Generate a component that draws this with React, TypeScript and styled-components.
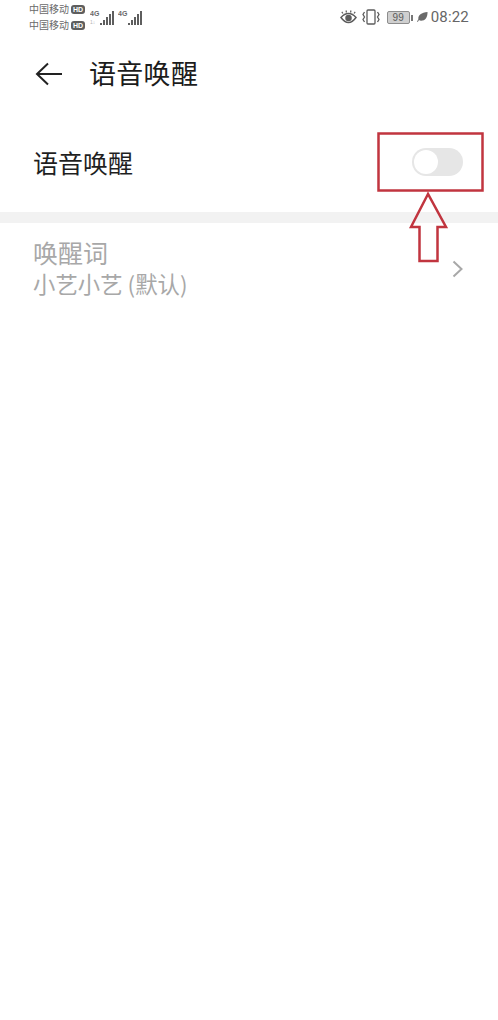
import React from "react";
import styled, { createGlobalStyle } from "styled-components";

const GlobalStyle = createGlobalStyle`
  html, body {
    margin: 0;
    padding: 0;
    background: #fff;
  }
  body {
    font-family: "Noto Sans CJK SC", "Liberation Sans", sans-serif;
  }
`;

const Screen = styled.div`
  position: relative;
  width: 498px;
  height: 1020px;
  overflow: hidden;
  background: #fff;
`;

// status bar
const StatusBar = styled.div`
  display: flex;
  align-items: flex-start;
  justify-content: space-between;
  height: 35px;
  padding: 2px 29px 0 29px;
  box-sizing: border-box;
  color: #6a6a6a;
`;

const StatusLeft = styled.div`
  display: flex;
  align-items: flex-start;
`;

const Carriers = styled.div`
  display: flex;
  flex-direction: column;
  gap: 2px;
  width: 60px;
`;

const Carrier = styled.div`
  display: flex;
  align-items: center;
  gap: 2px;
  height: 14px;
  font-size: 10px;
  line-height: 14px;
  white-space: nowrap;
`;

const HdBadge = styled.span`
  display: inline-flex;
  align-items: center;
  justify-content: center;
  width: 14px;
  height: 9px;
  border-radius: 3px;
  background: #5e5e5e;
  color: #fff;
  font-family: "Liberation Sans", sans-serif;
  font-size: 7px;
  font-weight: 700;
  line-height: 9px;
`;

const SignalGroup = styled.div`
  display: flex;
  gap: 4px;
  margin-top: 7px;
  margin-left: 1px;
`;

const StatusRight = styled.div`
  display: flex;
  align-items: center;
  height: 30px;
`;

const VibrateWrap = styled.div`
  display: flex;
  margin-left: 4px;
`;

const BatteryBox = styled.div`
  display: flex;
  align-items: center;
  margin: 1px 4px 0 6px;
`;

const BatteryBody = styled.div`
  width: 21px;
  height: 11px;
  border: 1px solid #8d8d8d;
  border-radius: 2px;
  background: #cfcfcf;
  color: #5c5c5c;
  font-family: "Liberation Sans", sans-serif;
  font-size: 10px;
  line-height: 11px;
  text-align: center;
`;

const BatteryNub = styled.div`
  width: 2px;
  height: 6px;
  margin-left: 1px;
  background: #777;
`;

const Clock = styled.span`
  margin-left: 3px;
  font-family: "Roboto", "Liberation Sans", sans-serif;
  font-size: 15px;
  letter-spacing: 0.2px;
  color: #666;
`;

// header
const Header = styled.div`
  display: flex;
  align-items: center;
  height: 78px;
  padding-left: 35px;
`;

const BackButton = styled.div`
  display: flex;
  width: 54px;
`;

const Title = styled.h1`
  margin: 0 0 2px;
  font-size: 27px;
  font-weight: 400;
  letter-spacing: 0.3px;
  line-height: 36px;
  color: #1c1c1c;
`;

// rows
const SwitchRow = styled.div`
  display: flex;
  align-items: center;
  justify-content: space-between;
  height: 67px;
  margin-top: 15px;
  padding: 0 35px 0 33px;
`;

const RowLabel = styled.div<{ $muted?: boolean }>`
  font-size: 25px;
  line-height: 34px;
  color: ${(p) => (p.$muted ? "#a8a8a8" : "#1f1f1f")};
`;

const Toggle = styled.div`
  display: flex;
  align-items: center;
  width: 51px;
  height: 28px;
  padding-left: 2px;
  box-sizing: border-box;
  border-radius: 14px;
  background: #e6e6e6;
`;

const Knob = styled.div`
  width: 24px;
  height: 24px;
  border-radius: 50%;
  background: #fff;
`;

const SectionGap = styled.div`
  height: 11px;
  margin-top: 17px;
  background: #f2f2f2;
`;

const WakeRow = styled.div`
  display: flex;
  align-items: center;
  justify-content: space-between;
  padding: 12px 35px 0 33px;
`;

const WakeText = styled.div`
  display: flex;
  flex-direction: column;
`;

const WakeValue = styled.div`
  font-size: 22.4px;
  line-height: 29px;
  color: #a8a8a8;
`;

const Chevron = styled.svg`
  margin-top: 4px;
`;

// red annotation drawn on top of the screenshot
const Annotation = styled.svg`
  position: absolute;
  left: 370px;
  top: 125px;
`;

const Signal = ({ small }: { small?: boolean }) => (
  <svg width="24" height="18" viewBox="0 0 24 18">
    <text x="0" y="7" fontSize="7" fontWeight="700" fontFamily="Liberation Sans" fill="#6a6a6a">
      4G
    </text>
    {small && (
      <text x="0" y="15" fontSize="5" fontFamily="Liberation Sans" fill="#b5b5b5">
        1↓
      </text>
    )}
    <g fill="#5e5e5e">
      <rect x="10" y="14" width="2" height="2" />
      <rect x="13" y="11" width="2" height="5" />
      <rect x="16" y="8" width="2" height="8" />
      <rect x="19" y="5" width="2" height="11" />
      <rect x="22" y="2" width="2" height="14" />
    </g>
  </svg>
);

const EyeIcon = () => (
  <svg width="17" height="15" viewBox="0 0 17 15" fill="none" stroke="#5c5c5c" strokeWidth="1.5">
    <path d="M1 7.5C3.5 4.5 6 3.5 8.5 3.5s5 1 7.5 4c-2.5 3.5-5 5-7.5 5s-5-1.500-7.500-5z" />
    <circle cx="8.500" cy="8" r="2.500" fill="#5c5c5c" />
    <path d="M3 3.500 1.800 1.800M6.500 2.500 6 .5M10.500 2.500 11 .5M14 3.500l1.200-1.700" strokeWidth="1.200" />
  </svg>
);

const VibrateIcon = () => (
  <svg width="20" height="16" viewBox="0 0 20 16" fill="none" stroke="#5c5c5c" strokeWidth="1.300">
    <rect x="6" y="1" width="8" height="14" rx="1" />
    <path d="M3.500 3 2 5.500l1.500 2.500L2 10.500 3.500 13M16.500 3 18 5.500 16.500 8l1.500 2.500-1.500 2.500" />
  </svg>
);

const LeafIcon = () => (
  <svg width="11" height="12" viewBox="0 0 12 12">
    <path d="M11.500.5C11.500 7 9 10 4.500 10c-1 0-1.800-.2-2.300-.6L.8 11.500 0 11l1.500-2.500C.8 4 5 1 11.500.5z" fill="#6a6a6a" />
  </svg>
);

const App = () => {
  return (
    <Screen>
      <GlobalStyle />
      <StatusBar>
        <StatusLeft>
          <Carriers>
            <Carrier>
              中国移动<HdBadge>HD</HdBadge>
            </Carrier>
            <Carrier>
              中国移动<HdBadge>HD</HdBadge>
            </Carrier>
          </Carriers>
          <SignalGroup>
            <Signal small />
            <Signal />
          </SignalGroup>
        </StatusLeft>
        <StatusRight>
          <EyeIcon />
          <VibrateWrap>
            <VibrateIcon />
          </VibrateWrap>
          <BatteryBox>
            <BatteryBody>99</BatteryBody>
            <BatteryNub />
          </BatteryBox>
          <LeafIcon />
          <Clock>08:22</Clock>
        </StatusRight>
      </StatusBar>

      <Header>
        <BackButton>
          <svg width="27" height="24" viewBox="0 0 27 24" fill="none" stroke="#222" strokeWidth="2">
            <path d="M13 1.500 2 12l11 10.500M2 12h25" />
          </svg>
        </BackButton>
        <Title>语音唤醒</Title>
      </Header>

      <SwitchRow>
        <RowLabel>语音唤醒</RowLabel>
        <Toggle>
          <Knob />
        </Toggle>
      </SwitchRow>

      <SectionGap />

      <WakeRow>
        <WakeText>
          <RowLabel $muted>唤醒词</RowLabel>
          <WakeValue>小艺小艺 (默认)</WakeValue>
        </WakeText>
        <Chevron width="11" height="18" viewBox="0 0 11 18" fill="none" stroke="#a8a8a8" strokeWidth="2">
          <path d="M1.500 1.500 9.500 9l-8 7.500" />
        </Chevron>
      </WakeRow>

      <Annotation width="120" height="140" viewBox="0 0 120 140" fill="none" stroke="#c1353f" strokeWidth="2.500">
        <rect x="8.500" y="8.500" width="104" height="57" />
        <path d="M58 69 41 102h8.500v34h18v-34H76z" />
      </Annotation>
    </Screen>
  );
};

export default App;
